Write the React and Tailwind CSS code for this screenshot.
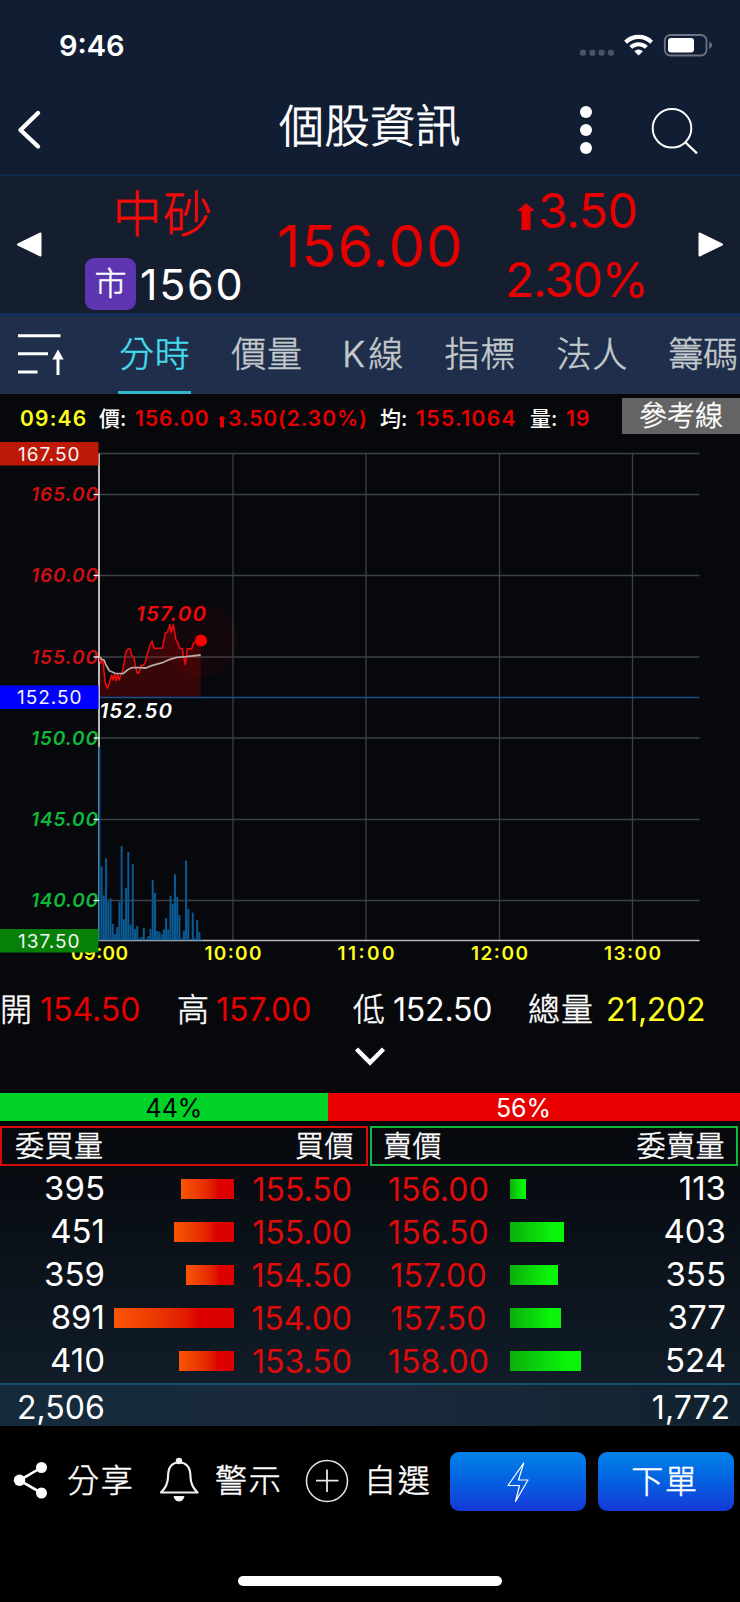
import React from "react";

const VOLUME = [
  580, 222, 134, 246, 116, 126, 49, 18, 39, 116, 283, 63, 157, 265, 47, 229, 33, 43, 6, 10, 37, 3, 13, 34,
  181, 142, 28, 26, 18, 33, 67, 33, 134, 110, 198, 130, 76, 6, 28, 239, 94, 4, 83, 6, 61, 24, 2,
];

const PRICE = [
  [298, 232], [302, 250], [308, 238], [311, 262], [315, 305], [322, 325], [328, 310], [335, 285], [340, 300],
  [344, 283], [349, 302], [353, 284], [358, 300], [362, 285], [368, 272], [372, 250], [378, 215], [385, 206],
  [391, 208], [395, 226], [402, 232], [407, 262], [412, 280], [418, 276], [422, 258], [430, 255], [436, 248],
  [442, 222], [450, 195], [456, 183], [462, 205], [487, 205], [492, 180], [495, 160], [502, 157], [507, 143],
  [510, 134], [514, 157], [520, 134], [524, 157], [528, 180], [534, 188], [538, 204], [547, 206], [551, 232],
  [556, 253], [559, 232], [562, 206], [575, 206], [580, 190], [590, 181], [602, 181],
];

const AVERAGE = [
  [298, 230], [305, 238], [312, 240], [318, 255], [328, 272], [345, 280], [370, 281], [382, 270], [395, 263],
  [415, 263], [438, 264], [455, 257], [490, 247], [510, 238], [530, 232], [560, 230], [602, 225],
];

const toPoints = (list) => list.map(([x, y]) => `${(x / 3).toFixed(1)},${(580 + y / 3).toFixed(1)}`).join(" ");

const TABS = [
  { label: "分時", active: true },
  { label: "價量" },
  { label: "K線" },
  { label: "指標" },
  { label: "法人" },
  { label: "籌碼" },
];

const BIDS = [
  { volume: "395", price: "155.50", bar: 53 },
  { volume: "451", price: "155.00", bar: 60.5 },
  { volume: "359", price: "154.50", bar: 48 },
  { volume: "891", price: "154.00", bar: 120 },
  { volume: "410", price: "153.50", bar: 55 },
];

const ASKS = [
  { volume: "113", price: "156.00", bar: 15.5 },
  { volume: "403", price: "156.50", bar: 54 },
  { volume: "355", price: "157.00", bar: 47.5 },
  { volume: "377", price: "157.50", bar: 51 },
  { volume: "524", price: "158.00", bar: 70.5 },
];

function StatusBar() {
  return (
    <div className="flex h-[88px] items-start justify-between pl-[59px] pr-[28px]">
      <div className="pt-[31px] text-[29px] leading-[29px] font-semibold">9:46</div>
      <svg className="mt-[31px]" width="134" height="28" viewBox="578 31 134 28">
        <g fill="#4a5364">
          <rect x="580" y="49.7" width="6" height="6" rx="2" />
          <rect x="589.3" y="49.7" width="6" height="6" rx="2" />
          <rect x="598.6" y="49.7" width="6" height="6" rx="2" />
          <rect x="607.9" y="49.7" width="6" height="6" rx="2" />
        </g>
        <g fill="none" stroke="#fff">
          <path d="M625.6 42.2a18.6 18.6 0 0 1 26 0" strokeWidth="4.2" />
          <path d="M630.8 47.4a11.2 11.2 0 0 1 15.600 0" strokeWidth="4" />
        </g>
        <path d="M638.6 55.500l-4.300-4.300a6.300 6.300 0 0 1 8.600 0z" fill="#fff" />
        <rect x="664.8" y="35" width="41.700" height="20.500" rx="5.500" fill="none" stroke="#6d7585" strokeWidth="1.800" />
        <rect x="668" y="38" width="26" height="14.500" rx="3" fill="#fff" />
        <path d="M709.300 41.500q2.700 1.300 2.700 3.700t-2.700 3.700z" fill="#6d7585" />
      </svg>
    </div>
  );
}

function Header() {
  return (
    <div className="flex h-[86px] items-start">
      <svg className="mt-[20px] ml-[14px]" width="30" height="44" viewBox="14 108 30 44">
        <path d="M38 113 20.500 130 38 146.500" fill="none" stroke="#fff" strokeWidth="4.400" strokeLinecap="round" strokeLinejoin="round" />
      </svg>
      <div className="ml-[235px] mt-[16px] w-[184px] text-[45px] leading-[46px] font-light tracking-[0.500px] whitespace-nowrap [-webkit-text-stroke:0.8px]">個股資訊</div>
      <svg className="mt-[16px] ml-[105px]" width="36" height="52" viewBox="568 104 36 52" fill="#fff">
        <circle cx="586" cy="112" r="6" />
        <circle cx="586" cy="130" r="6" />
        <circle cx="586" cy="148" r="6" />
      </svg>
      <svg className="mt-[16px] ml-[44px]" width="56" height="56" viewBox="648 104 56 56" fill="none" stroke="#fff" strokeWidth="2">
        <circle cx="672" cy="128.300" r="19.300" />
        <path d="M685.500 142.500 697 153.300" strokeWidth="2.300" />
      </svg>
    </div>
  );
}

function UpArrow({ className }) {
  return (
    <svg className={className} viewBox="0 0 18 27" fill="#e60000">
      <path d="M9 0 18 8H13.500V27H4.500V8H0z" />
    </svg>
  );
}

function Quote() {
  return (
    <div className="flex h-[142px] items-start border-t-2 border-b-3 border-t-[#0d2a4d] border-b-[#12305a] bg-[#141e2e] text-[#e60000]">
      <svg className="mt-[53px] ml-[16px]" width="27" height="30" viewBox="16 229 27 30">
        <path d="M18 244.500 40.500 233.500V255.500z" fill="#fff" stroke="#fff" strokeWidth="2" strokeLinejoin="round" />
      </svg>
      <div className="ml-[42px] w-[160px]">
        <div className="mt-[14px] pl-[28px] text-[49px] leading-[50px] font-light tracking-[1.500px] text-[#f50a0a] [-webkit-text-stroke:0.8px]">中砂</div>
        <div className="mt-[18px] flex items-center text-white">
          <div className="flex h-[52px] w-[51px] items-center justify-center rounded-[9px] bg-[#5d35b0] text-[32px] font-light [-webkit-text-stroke:0.5px]">市</div>
          <div className="ml-[4px] text-[43px] leading-[50px] tracking-[1.700px]">1560</div>
        </div>
      </div>
      <div className="ml-[32px] mt-[41px] w-[190px] text-[58px] leading-[58px] tracking-[0.900px]">156.00</div>
      <div className="ml-[38px] w-[150px] text-[48px] leading-[68px]">
        <div className="flex h-[68px] items-start pl-[12px]">
          <UpArrow className="mt-[27px] mr-[3px] h-[27px] w-[18px]" />
          <span className="leading-[70px] tracking-[-0.500px]">3.50</span>
        </div>
        <div className="leading-[71px] tracking-[-1.300px]">2.30%</div>
      </div>
      <svg className="mt-[53px] ml-[41px]" width="30" height="30" viewBox="696 229 30 30">
        <path d="M722 244.500 699.500 233.500V255.500z" fill="#fff" stroke="#fff" strokeWidth="2" strokeLinejoin="round" />
      </svg>
    </div>
  );
}

function Tabs() {
  return (
    <div className="flex h-[78px] items-start bg-[#1f2f4b]">
      <svg className="mt-[14px] ml-[16px] shrink-0" width="50" height="48" viewBox="16 330 50 48" fill="none" stroke="#fff" strokeWidth="3">
        <path d="M18 335.700H60.500M18 353.700H48M18 372H37.500M58 375V357" />
        <path d="M58 349.500 52.300 359.500H63.700z" fill="#fff" stroke="none" />
      </svg>
      <div className="ml-[52px] flex gap-[39.300px] text-[35px] leading-[50px] font-light whitespace-nowrap [-webkit-text-stroke:0.5px]">
        {TABS.map((t) => (
          <div
            key={t.label}
            className={
              t.active
                ? "h-[78px] w-[73px] shrink-0 border-b-[3px] border-[#2fb6c8] pt-[13px] pl-px tracking-[0.800px] text-[#46dcf0]"
                : "h-[78px] shrink-0 pt-[13px] pl-px tracking-[0.800px] text-[#c4c9cc] last:tracking-[-0.400px]"
            }
          >
            {t.label === "K線" ? (
              <>
                <span className="-ml-px tracking-[3.500px]">K</span>線
              </>
            ) : (
              t.label
            )}
          </div>
        ))}
      </div>
    </div>
  );
}

function InfoRow() {
  return (
    <div className="flex h-[42px] items-start text-[21px] leading-[50px] font-semibold whitespace-nowrap text-[#e60000]">
      <span className="ml-[20px] w-[79px] tracking-[1.200px] text-[#ffff1e]">09:46</span>
      <span className="w-[36px] font-medium text-white">價:</span>
      <span className="w-[83px] tracking-[1px]">156.00</span>
      <UpArrow className="mt-[21px] mr-[2px] h-[13px] w-[8px]" />
      <span className="w-[152px] tracking-[0.900px]">3.50(2.30%)</span>
      <span className="w-[36px] font-medium text-white">均:</span>
      <span className="w-[114px] tracking-[1.400px]">155.1064</span>
      <span className="w-[36px] font-medium text-white">量:</span>
      <span className="w-[56px] tracking-[1.200px]">19</span>
      <div className="mt-[4px] flex h-[36px] flex-1 items-center justify-center bg-[#646464] text-[28px] leading-none font-light text-white [-webkit-text-stroke:0.5px]">
        參考線
      </div>
    </div>
  );
}

function Chart() {
  const levels = [
    ["165.00", 494.5, "#d01010"],
    ["160.00", 575.5, "#d01010"],
    ["155.00", 657, "#d01010"],
    ["150.00", 738, "#12b83a"],
    ["145.00", 819.5, "#12b83a"],
    ["140.00", 900.5, "#12b83a"],
  ];
  const hours = [
    ["09:00", 99.5],
    ["10:00", 233],
    ["11:00", 366],
    ["12:00", 499.5],
    ["13:00", 632.5],
  ];
  const badges = [
    ["167.50", 442, "#bd1808", 18, 60],
    ["152.50", 685.5, "#0000ff", 17, 63],
    ["137.50", 929, "#078007", 18, 60],
  ];
  return (
    <svg className="block" width="740" height="536" viewBox="0 436 740 536">
      <g stroke="#3c4045" strokeWidth="1.300">
        {[453.5, 494.5, 575.5, 657, 738, 819.5, 900.5].map((y) => (
          <path key={y} d={`M99 ${y}H699.500`} />
        ))}
        {hours.slice(1).map(([label, x]) => (
          <path key={label} d={`M${x} 453.500V940`} />
        ))}
      </g>
      <circle cx="201" cy="640.500" r="36.500" fill="#ff0000" opacity="0.050" />
      <polygon points={`99,697.500 ${toPoints(PRICE)} 200.700,697.500`} fill="#ff0000" opacity="0.200" />
      <path d="M99 697.500H699.500" stroke="#14508c" strokeWidth="1.500" />
      <path d="M99 453.500V940.500" stroke="#e8e8e8" strokeWidth="1.600" />
      <path d="M99 940.500H699.500" stroke="#b8b8b8" strokeWidth="1.500" />
      <g fill="#0b5a94">
        {VOLUME.map((v, i) => (
          <rect key={i} x={98.4 + i * 2.223} y={940.3 - v / 3} width="2" height={v / 3} />
        ))}
      </g>
      <polyline points={toPoints(PRICE)} fill="none" stroke="#f50808" strokeWidth="1.500" strokeLinejoin="round" />
      <polyline points={toPoints(AVERAGE)} fill="none" stroke="#b8a8a4" strokeWidth="1.800" strokeLinejoin="round" />
      <circle cx="201" cy="640.500" r="6" fill="#ff0000" />
      <g fontSize="19" fontWeight="600" fontStyle="italic">
        {levels.map(([label, y, color]) => (
          <g key={label}>
            <text x="31" y={y + 6.8} fill={color} textLength="67">{label}</text>
            <path d={`M93.500 ${y}H99`} stroke="#fff" strokeWidth="1.300" />
          </g>
        ))}
      </g>
      <g fontSize="20.500" fontWeight="600" fontStyle="italic">
        <text x="136" y="621" fill="#f00a0a" textLength="70">157.00</text>
        <text x="99.500" y="718" fill="#fff" textLength="72.500">152.50</text>
      </g>
      <g fontSize="19" fontWeight="600" fill="#ffff1e" textAnchor="middle">
        {hours.map(([label, x]) => (
          <text key={label} x={x} y="960" textLength="57">{label}</text>
        ))}
      </g>
      {badges.map(([label, y, color, x, w]) => (
        <g key={label}>
          <rect x="0" y={y} width="98.500" height="23.500" fill={color} />
          <text x={x} y={y + 18.5} fontSize="19" fill="#f4f4f4" textLength={w + 1.5}>{label}</text>
        </g>
      ))}
    </svg>
  );
}

function Summary() {
  return (
    <div className="h-[121px]">
      <div className="flex h-[72px] items-center pt-[4px] text-[32px] whitespace-nowrap text-[#e60000]">
        <span className="w-[40px] font-light text-white [-webkit-text-stroke:0.5px]">開</span>
        <span className="w-[137px]">154.50</span>
        <span className="w-[39px] font-light text-white [-webkit-text-stroke:0.5px]">高</span>
        <span className="w-[137px]">157.00</span>
        <span className="w-[40px] font-light text-white [-webkit-text-stroke:0.5px]">低</span>
        <span className="w-[135px] tracking-[-0.200px] text-white">152.50</span>
        <span className="w-[78px] font-light tracking-[1px] text-white [-webkit-text-stroke:0.5px]">總量</span>
        <span className="tracking-[-0.300px] text-[#ffff1e]">21,202</span>
      </div>
      <svg className="mx-auto" width="34" height="24" viewBox="353 1045 34 24">
        <path d="M356.500 1050 370 1063.500 383.500 1050" fill="none" stroke="#fff" strokeWidth="4.500" />
      </svg>
    </div>
  );
}

function OrderBook() {
  return (
    <div className="flex flex-col">
      <div className="flex h-[28px] text-[25px] leading-[31px]">
        <div className="flex w-[328px] justify-center bg-[#00d228] pl-[20px] text-black">44%</div>
        <div className="flex flex-1 justify-center bg-[#e80000] pr-[21px]">56%</div>
      </div>
      <div className="mt-[5px] flex h-[40px] gap-[2px] pr-[2px] text-[29px] leading-[38px] font-light tracking-[0.500px] [-webkit-text-stroke:0.5px]">
        <div className="flex w-[368px] justify-between border-2 border-[#d80a0a] pr-[12px] pl-[13px]">
          <span>委買量</span>
          <span>買價</span>
        </div>
        <div className="flex flex-1 justify-between border-2 border-[#12b83a] px-[11px]">
          <span>賣價</span>
          <span>委賣量</span>
        </div>
      </div>
      <div className="flex h-[217px] pt-[1px] text-[32px] leading-[43px]">
        <div className="w-[370px]">
          {BIDS.map((row) => (
            <div key={row.price} className="flex h-[43px] items-center">
              <span className="w-[105px] text-right text-[33px]">{row.volume}</span>
              <div className="flex w-[129px] justify-end">
                <div className="h-[20px] bg-linear-to-r from-[#fa5505] to-[#dc0000] to-70%" style={{ width: row.bar }} />
              </div>
              <span className="w-[118px] pt-px text-right text-[#e00a0a]">{row.price}</span>
            </div>
          ))}
        </div>
        <div className="flex-1">
          {ASKS.map((row) => (
            <div key={row.price} className="flex h-[43px] items-center">
              <span className="w-[140px] pt-px pr-[3px] text-center tracking-[0.200px] text-[#e00a0a]">{row.price}</span>
              <div className="flex-1">
                <div className="h-[20px] bg-linear-to-r from-[#0aaf0a] to-[#0af50a] to-80%" style={{ width: row.bar }} />
              </div>
              <span className="pr-[14px] text-[33px]">{row.volume}</span>
            </div>
          ))}
        </div>
      </div>
      <div className="flex h-[43px] justify-between border-t-2 border-[#155070] bg-linear-to-r from-[#142a3a] via-[#1a2a3c] to-[#10222f] pr-[10px] pl-[17px] text-[32px] leading-[45px]">
        <span>2,506</span>
        <span>1,772</span>
      </div>
    </div>
  );
}

function BottomBar() {
  return (
    <div className="flex h-[176px] flex-col bg-black">
      <div className="mt-[24px] flex h-[61px] items-center pt-px text-[32px] leading-[60px] font-light tracking-[1.700px] whitespace-nowrap [-webkit-text-stroke:0.5px]">
        <svg className="ml-[12px]" width="38" height="42" viewBox="12 1461 38 42">
          <path d="M41.500 1468.500 19.500 1481.300 41.500 1494" fill="none" stroke="#fff" strokeWidth="2.600" />
          <g fill="#fff">
            <circle cx="41.500" cy="1468.500" r="5.500" />
            <circle cx="19.500" cy="1481.300" r="5.700" />
            <circle cx="41.500" cy="1494" r="5.500" />
          </g>
        </svg>
        <span className="ml-[17px] w-[90px]">分享</span>
        <svg width="44" height="48" viewBox="157 1458 44 48" fill="none" stroke="#f0f0f0" strokeWidth="2.200">
          <path d="M161 1493.500C166.500 1488 168 1484 168 1478C168 1468 171.500 1463.500 179 1463.500S190.500 1468 190.500 1478C190.500 1484 192 1488 197.500 1493.500z" strokeLinejoin="round" />
          <circle cx="179" cy="1462" r="2.200" fill="#fff" />
          <path d="M174 1497.500H184Q183 1502 179 1502T174 1497.500z" fill="#fff" strokeWidth="1" />
        </svg>
        <span className="ml-[14px] w-[88px]">警示</span>
        <svg className="ml-px" width="46" height="46" viewBox="304 1458 46 46" fill="none" stroke="#e8e8e8" strokeWidth="1.500">
          <circle cx="327" cy="1481" r="20.500" />
          <path d="M327 1469.500V1492M316 1480.700H338.500" strokeWidth="1.800" />
        </svg>
        <span className="ml-[14px] w-[86px]">自選</span>
        <button className="flex h-[59px] w-[136px] items-center justify-center rounded-[9px] bg-linear-to-b from-[#0482e8] to-[#1636d6]">
          <svg width="24" height="42" viewBox="506 1460 24 42" fill="none" stroke="#fff" strokeWidth="1.200" strokeLinejoin="round">
            <path d="M523.700 1463 508 1485.500H519.500L515.500 1501.500 528 1480H518.500z" />
          </svg>
        </button>
        <button className="ml-[12px] h-[59px] w-[136px] rounded-[9px] bg-linear-to-b from-[#0482e8] to-[#1636d6] pr-[2px]">下單</button>
      </div>
      <div className="mx-auto mt-[65px] h-[10px] w-[264px] rounded-full bg-white" />
    </div>
  );
}

export default function App() {
  return (
    <div className="flex h-[1602px] w-[740px] flex-col overflow-hidden bg-[#06080c] font-['Inter','Noto_Sans_CJK_TC',sans-serif] text-white">
      <div className="bg-[#111d32]">
        <StatusBar />
        <Header />
      </div>
      <Quote />
      <Tabs />
      <InfoRow />
      <div className="bg-linear-to-b from-[#06080c] from-70% to-[#12202d]">
        <Chart />
        <Summary />
        <OrderBook />
      </div>
      <BottomBar />
    </div>
  );
}
